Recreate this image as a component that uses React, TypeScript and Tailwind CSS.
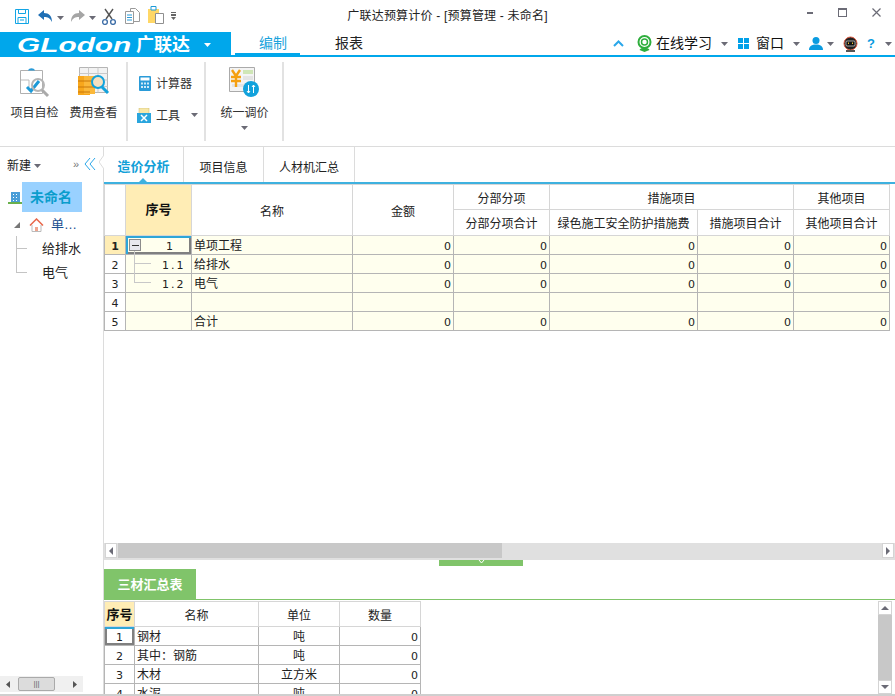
import type { ReactNode } from 'react'

const cjk = "font-['Liberation_Sans','Noto_Sans_CJK_SC',sans-serif]"

function Caret({ className = '' }: { className?: string }) {
  return (
    <svg width="7" height="4" viewBox="0 0 7 4" className={className}>
      <path d="M0 0h7L3.5 4z" fill="#6b6b76" />
    </svg>
  )
}

function QuickBar() {
  return (
    <div className="flex items-center h-8 pl-[15px]">
      <svg width="14" height="15" viewBox="0 0 14 15" fill="none" stroke="#12a5e5" strokeWidth="1">
        <path d="M.5.5h13v14H.5z" />
        <path d="M3.5.5v4h7v-4M3 14.5v-6h8v6M5 11h4" />
      </svg>
      <svg width="15" height="13" viewBox="0 0 15 13" className="ml-[9px]">
        <path d="M0 5 6 0v3c5 0 8 3 8 9-2-4-4-5-8-5v3z" fill="#1f6fb5" />
      </svg>
      <Caret className="ml-[4px] mt-1" />
      <svg width="15" height="13" viewBox="0 0 15 13" className="ml-[6px]">
        <path d="M15 5 9 0v3c-5 0-8 3-8 9 2-4 4-5 8-5v3z" fill="#a5a5a5" />
      </svg>
      <Caret className="ml-[4px] mt-1" />
      <svg width="14" height="17" viewBox="0 0 14 17" fill="none" className="ml-[6px]">
        <path d="M3 1l7 10M11 1 4 11" stroke="#555" strokeWidth="1.4" />
        <circle cx="3" cy="14" r="2.4" stroke="#3f6fa8" strokeWidth="1.4" />
        <circle cx="11" cy="14" r="2.4" stroke="#3f6fa8" strokeWidth="1.4" />
      </svg>
      <svg width="15" height="16" viewBox="0 0 15 16" fill="none" className="ml-[9px]">
        <path d="M5.5.5h5l4 4v9h-9z" fill="#fff" stroke="#9a9a9a" />
        <path d="M.5 3.5h8v12h-8z" fill="#fff" stroke="#9a9a9a" />
        <path d="M2 7h5M2 9.5h5M2 12h5" stroke="#2a9bd8" />
      </svg>
      <svg width="16" height="19" viewBox="0 0 16 19" fill="none" className="ml-[8px] -mt-1">
        <path d="M0 4h11v14H0z" fill="#ffd766" />
        <path d="M3 1.5h5V5H3z" fill="#fff" stroke="#1c9ad8" />
        <path d="M7.5 8.5h8v10h-8z" fill="#fff" stroke="#8f8f8f" />
      </svg>
      <svg width="5" height="8" viewBox="0 0 5 8" className="ml-[7px]">
        <path d="M0 0h5v1H0zM0 2h5v2H0zM0 5h5L2.5 8z" fill="#666" />
      </svg>
    </div>
  )
}

function WindowButtons() {
  return (
    <div className="flex justify-end items-start h-8 pt-[8px] pr-[14px] gap-[25px]">
      <div className="w-[6px] h-[2px] bg-[#6b6b76] mt-[4px]" />
      <div className="w-[9px] h-[9px] border border-[#6b6b76] border-t-2" />
      <svg width="9" height="9" viewBox="0 0 9 9" stroke="#6b6b76" strokeWidth="1.2">
        <path d="M.5.5l8 8M8.5.5l-8 8" />
      </svg>
    </div>
  )
}

function MenuBar() {
  return (
    <div className="flex h-[25px] border-b-2 border-[#00a7eb]">
      <div className="w-[231px] h-[25px] bg-[#00a7eb] flex items-center pl-[17px] text-white shrink-0">
        <span className="font-['Liberation_Sans'] italic font-bold text-[21px] leading-none w-[119px] scale-x-[1.42] origin-left">GLodon</span>
        <span className="font-bold text-[18px] leading-none">广联达</span>
        <svg width="7" height="4" viewBox="0 0 7 4" className="ml-[14px]"><path d="M0 0h7L3.5 4z" fill="#fff" /></svg>
      </div>
      <div className="ml-[4px] w-[65px] h-[25px] border-b-4 border-[#00a7eb] text-[14px] text-[#1aa3dc] leading-[23px] pl-[24px] whitespace-nowrap">编制</div>
      <div className="ml-[35px] text-[14px] text-[#222] leading-[23px]">报表</div>
      <div className="ml-auto flex items-center text-[14px] text-[#111] pr-[3px] h-[23px]">
        <svg width="11" height="7" viewBox="0 0 11 7" fill="none" stroke="#2aa7ea" strokeWidth="2"><path d="M1 6l4.5-4.5L10 6" /></svg>
        <svg width="17" height="17" viewBox="0 0 17 17" fill="none" className="ml-[12px]">
          <circle cx="8.5" cy="7" r="6" stroke="#2fae3d" strokeWidth="2" />
          <circle cx="8.5" cy="7" r="3" stroke="#2fae3d" strokeWidth="1.5" />
          <path d="M3.5 15c1-3 9-3 10 0l-5 2z" fill="#2fae3d" />
        </svg>
        <span className="ml-[3px]">在线学习</span>
        <Caret className="ml-[9px]" />
        <div className="ml-[10px] grid grid-cols-2 gap-[1px] w-[11px] h-[11px]">
          <i className="bg-[#00a0e9]" /><i className="bg-[#00a0e9]" /><i className="bg-[#00a0e9]" /><i className="bg-[#00a0e9]" />
        </div>
        <span className="ml-[7px]">窗口</span>
        <Caret className="ml-[9px]" />
        <svg width="14" height="13" viewBox="0 0 14 13" className="ml-[9px]">
          <circle cx="7" cy="3.5" r="3.5" fill="#0a9be0" />
          <path d="M0 13c0-4 3-5.5 7-5.5s7 1.5 7 5.5z" fill="#0a9be0" />
        </svg>
        <Caret className="ml-[4px]" />
        <svg width="15" height="16" viewBox="0 0 15 16" className="ml-[9px]">
          <circle cx="7.5" cy="7.5" r="6.5" fill="#222" stroke="#d9593f" strokeWidth="1" />
          <rect x="3" y="5" width="9" height="5" rx="1" fill="#111" stroke="#fff" strokeWidth=".6" />
          <path d="M5 6.5h1V8H5zM9 6.5h1V8H9z" fill="#f2c230" />
          <path d="M3 14h9v2H3z" fill="#555" />
        </svg>
        <span className="ml-[9px] text-[#0a9be0] font-bold text-[13px] w-[9px]">?</span>
        <Caret className="ml-[9px]" />
      </div>
    </div>
  )
}

function RibbonLarge({ label, icon, caret }: { label: string; icon: ReactNode; caret?: boolean }) {
  return (
    <div className="flex flex-col items-center w-[59px]">
      <div className="h-[33px] flex items-center justify-center">{icon}</div>
      <div className="mt-[6px] text-[12px] leading-[16px] whitespace-nowrap text-[#333]">{label}</div>
      {caret && <Caret className="mt-[5px]" />}
    </div>
  )
}

function Ribbon() {
  return (
    <div className="flex h-[90px] border-b border-[#dcdcdc] py-[5px]">
      <div className="w-[128px] border-r-2 border-[#e2e2e2] pl-[5px] pt-[4px] flex">
        <RibbonLarge
          label="项目自检"
          icon={
            <svg width="32" height="30" viewBox="0 0 32 30" fill="none">
              <path d="M1.5 2.5h22v23h-22z" stroke="#b0b0b0" />
              <path d="M9 2.5c1-3 6-3 7 0z" fill="#2a9bd8" />
              <path d="M2 12h8v7" stroke="#bbb" />
              <path d="M8 19l4 4 8-10" stroke="#1c9ad8" strokeWidth="3" />
              <circle cx="19" cy="17" r="6" stroke="#b5b5b5" strokeWidth="2" />
              <path d="M23 22l6 6" stroke="#aaa" strokeWidth="3" />
            </svg>
          }
        />
        <RibbonLarge
          label="费用查看"
          icon={
            <svg width="32" height="31" viewBox="0 0 32 31" fill="none">
              <path d="M1.5.5h28v25h-28z" fill="#f2f2f2" stroke="#b5b5b5" />
              <path d="M1.5 6.5h28M1.5 13h28M1.5 19.5h28M10.5.5v25M20 .5v25" stroke="#c9c9c9" />
              <path d="M0 9h12v19H0z" fill="#f8a71c" />
              <path d="M6 9h11v18H6z" fill="#fbb83a" />
              <path d="M0 14h17M0 20h17M0 25h12" stroke="#c9780a" />
              <circle cx="20" cy="15" r="6" fill="#f5e0c0" stroke="#12a2dc" strokeWidth="2" />
              <path d="M24 20l6 6" stroke="#12a2dc" strokeWidth="3" />
            </svg>
          }
        />
      </div>
      <div className="w-[78px] border-r-2 border-[#e2e2e2] pl-[10px] text-[12px] text-[#333]">
        <div className="flex items-center h-[16px] mt-[13px] ml-[1px]">
          <svg width="12" height="15" viewBox="0 0 12 15">
            <rect width="12" height="15" rx="1" fill="#2a9bd8" />
            <rect x="1.5" y="1.5" width="9" height="3" fill="#fff" />
            <path d="M2 6.5h2v2H2zM5 6.5h2v2H5zM8 6.5h2v2H8zM2 10h2v2H2zM5 10h2v2H5zM8 10h2v2H8z" fill="#cfeaf8" />
          </svg>
          <span className="ml-[5px] pt-[1px] whitespace-nowrap">计算器</span>
        </div>
        <div className="flex items-center h-[18px] mt-[15px] -ml-[1px]">
          <svg width="14" height="15" viewBox="0 0 14 15">
            <path d="M2 0h10v8H2z" fill="#f6e7a8" stroke="#c8b66a" strokeWidth=".5" />
            <path d="M0 5h14v10H0z" fill="#2aa5dd" />
            <path d="M4 7l6 6M10 7l-6 6" stroke="#fff" strokeWidth="1.5" />
          </svg>
          <span className="ml-[5px] pt-[1px] whitespace-nowrap">工具</span>
          <Caret className="ml-[11px]" />
        </div>
      </div>
      <div className="w-[78px] border-r-2 border-[#e2e2e2] pl-[9px] pt-[4px]">
        <RibbonLarge
          caret
          label="统一调价"
          icon={
            <svg width="31" height="31" viewBox="0 0 31 31">
              <path d="M.5.5h25v24H.5z" fill="#f4f4f4" stroke="#aaa" />
              <path d="M14 3h10v4H14z" fill="#cfe6b6" />
              <path d="M14 9h10v4H14zM3 17h14v3H3z" fill="#e4e4e4" />
              <path d="M3 3l4 6 4-6M2 10h10M2 14h10M7 9v11" stroke="#f5a011" strokeWidth="2.4" fill="none" />
              <circle cx="22" cy="22" r="8" fill="#12a2dc" />
              <path d="M19.5 18v8M24.5 18v8M18 24l1.5 2 1.5-2M23 20l1.5-2 1.5 2" stroke="#fff" fill="none" />
            </svg>
          }
        />
      </div>
    </div>
  )
}

function Sidebar() {
  return (
    <div className="w-[104px] shrink-0 border-r border-[#dcdcdc] flex flex-col relative">
      <svg width="5" height="14" viewBox="0 0 5 14" fill="#fff" stroke="#dcdcdc" className="absolute -right-[1px] top-[8px]">
        <path d="M5 0 0 7l5 7" />
      </svg>
      <div className="flex items-center h-[35px] pl-[7px] pt-[2px] text-[12px] text-[#222]">
        新建
        <Caret className="ml-[3px]" />
        <span className="ml-auto mr-[5px] text-[#777] text-[11px] -mt-[2px]">»</span>
        <svg width="12" height="14" viewBox="0 0 12 14" fill="none" stroke="#2aa7ea" className="mr-[7px] -mt-[4px]">
          <path d="M6 1 1 7l5 6M11 1 6 7l5 6" />
        </svg>
      </div>
      <div className="flex items-center h-[30px]">
        <svg width="14" height="14" viewBox="0 0 14 14" className="ml-[8px]">
          <path d="M3 2h9v11H3z" fill="#4a9ed8" />
          <path d="M5 4h1v1H5zM8 4h1v1H8zM5 7h1v1H5zM8 7h1v1H8zM5 10h1v1H5zM8 10h1v1H8z" fill="#fff" />
          <path d="M0 12h14v2H0z" fill="#6ab04c" />
        </svg>
        <div className="w-[60px] h-[30px] bg-[#99d1ff] text-[14px] font-bold text-[#0a9dcc] pl-[8px] leading-[30px]">未命名</div>
      </div>
      <div className="flex items-center h-[23px] mt-[1px] pl-[14px] text-[13px] text-[#1b4f8f]">
        <svg width="6" height="6" viewBox="0 0 6 6"><path d="M6 0v6H0z" fill="#777" /></svg>
        <svg width="15" height="14" viewBox="0 0 15 14" fill="none" className="ml-[9px]">
          <path d="M3 7v6.5h9V7" stroke="#bbb" fill="#fff" />
          <path d="M1 7.5 7.5 1 14 7.5" stroke="#e8674a" strokeWidth="1.5" />
          <path d="M6 9h3v4H6z" fill="#f0a58e" />
        </svg>
        <span className="ml-[7px] whitespace-nowrap">单…</span>
      </div>
      <div className="relative pl-[42px] text-[13px] text-[#222] leading-[23px] mt-[1px]">
        <div className="h-[24px]">给排水</div>
        <div className="h-[23px]">电气</div>
        <div className="absolute left-[16px] top-[-1px] w-[11px] h-[13px] border-l border-b border-[#c4c4c4]" />
        <div className="absolute left-[16px] top-[12px] w-[11px] h-[24px] border-l border-b border-[#c4c4c4]" />
      </div>
      <div className="mt-auto mb-[2px] w-[83px] h-[16px] bg-[#f0f0f0] flex items-center px-[6px]">
        <svg width="4" height="7" viewBox="0 0 4 7"><path d="M4 0v7L0 3.5z" fill="#555" /></svg>
        <div className="ml-[8px] w-[37px] h-[14px] rounded-[2px] border border-[#aaa] bg-[#dcdcdc] flex items-center justify-center text-[8px] text-[#666] leading-none">|||</div>
        <svg width="4" height="7" viewBox="0 0 4 7" className="ml-auto"><path d="M0 0v7l4-3.5z" fill="#555" /></svg>
      </div>
    </div>
  )
}

const num = "font-['DejaVu_Sans',sans-serif] text-[11px] leading-[15px] pt-[3px]"
const head = 'border border-[#d6d6d6] font-normal text-center p-0 pt-[3px] leading-[16px]'
const body = 'border border-[#b5b5b5] bg-[#ffffee] p-0 px-[2px]'
const cellText = 'pt-[3px] leading-[15px]'
const selected = 'shadow-[inset_2px_2px_0_#2ea6d8,inset_-2px_-2px_0_#808080]'

const rows = [
  { no: '1', seq: '1', name: '单项工程', zero: true },
  { no: '2', seq: '1.1', name: '给排水', zero: true },
  { no: '3', seq: '1.2', name: '电气', zero: true },
  { no: '4', seq: '', name: '', zero: false },
  { no: '5', seq: '', name: '合计', zero: true },
]

function CostGrid() {
  return (
    <table className="table-fixed w-[785px] text-[12px] text-[#222] border-collapse">
      <colgroup>
        <col className="w-[21px]" />
        <col className="w-[66px]" />
        <col className="w-[161px]" />
        <col className="w-[101px]" />
        <col className="w-[96px]" />
        <col className="w-[148px]" />
        <col className="w-[96px]" />
        <col className="w-[96px]" />
      </colgroup>
      <thead>
        <tr className="h-[25px]">
          <th rowSpan={2} className={head} />
          <th rowSpan={2} className="border border-[#d6d6d6] p-0 bg-[#ffedb5] font-bold text-[13px] text-[#111]">序号</th>
          <th rowSpan={2} className={head}>名称</th>
          <th rowSpan={2} className={head}>金额</th>
          <th className={head}>分部分项</th>
          <th colSpan={2} className={head}>措施项目</th>
          <th className={head}>其他项目</th>
        </tr>
        <tr className="h-[26px]">
          <th className={head}>分部分项合计</th>
          <th className={head}>绿色施工安全防护措施费</th>
          <th className={head}>措施项目合计</th>
          <th className={head}>其他项目合计</th>
        </tr>
      </thead>
      <tbody>
        {rows.map((r, i) => (
          <tr key={r.no} className="h-[19px]">
            <td className={'border border-[#b5b5b5] text-center p-0 ' + num + (i === 0 ? ' bg-[#ffedb5] font-bold' : ' bg-white')}>{r.no}</td>
            <td className={body + ' relative tracking-[2px] whitespace-nowrap ' + num + (i === 0 ? ' ' + selected : '')}>
              {i === 0 && (
                <div className="absolute left-[3px] top-[3px] w-[12px] h-[12px] border border-[#8c8c8c] bg-[#e8e8ee] flex items-center justify-center">
                  <div className="w-[7px] h-[1px] bg-[#333]" />
                </div>
              )}
              {(i === 1 || i === 2) && (
                <div className={'absolute left-[8px] w-[17px] border-l border-b border-[#c8c8c8] ' + (i === 1 ? '-top-[4px] h-[13px]' : '-top-[10px] h-[19px]')} />
              )}
              <span className={i === 0 ? 'pl-[38px]' : 'pl-[34px]'}>{r.seq}</span>
            </td>
            <td className={body + ' whitespace-nowrap ' + cellText}>{r.name}</td>
            {[0, 1, 2, 3, 4].map((c) => (
              <td key={c} className={body + ' text-right ' + num}>{r.zero ? '0' : ''}</td>
            ))}
          </tr>
        ))}
      </tbody>
    </table>
  )
}

function HScroll() {
  return (
    <div className="h-[15px] bg-[#e0e0e0] flex items-stretch shrink-0">
      <div className="ml-[1px] w-[12px] bg-white border border-[#d4d4d4] flex items-center justify-center">
        <svg width="4" height="8" viewBox="0 0 4 8"><path d="M4 0v8L0 4z" fill="#6b6b76" /></svg>
      </div>
      <div className="ml-[1px] w-[384px] bg-[#c8c8c8]" />
      <div className="ml-auto mr-[1px] w-[12px] bg-white border border-[#d4d4d4] flex items-center justify-center">
        <svg width="4" height="8" viewBox="0 0 4 8"><path d="M0 0v8l4-4z" fill="#6b6b76" /></svg>
      </div>
    </div>
  )
}

const materials = [
  { no: '1', name: '钢材', unit: '吨' },
  { no: '2', name: '其中：钢筋', unit: '吨' },
  { no: '3', name: '木材', unit: '立方米' },
  { no: '4', name: '水泥', unit: '吨' },
]

function MaterialGrid() {
  return (
    <table className="table-fixed w-[316px] text-[12px] text-[#222] border-collapse">
      <colgroup>
        <col className="w-[30px]" />
        <col className="w-[124px]" />
        <col className="w-[81px]" />
        <col className="w-[81px]" />
      </colgroup>
      <thead>
        <tr className="h-[25px]">
          <th className="border border-[#d6d6d6] bg-[#ffedb5] font-bold text-[13px] text-[#111] p-0 pt-[2px] leading-[16px]">序号</th>
          <th className={head}>名称</th>
          <th className={head}>单位</th>
          <th className={head}>数量</th>
        </tr>
      </thead>
      <tbody>
        {materials.map((m, i) => (
          <tr key={m.no} className="h-[19px]">
            <td className={'border border-[#b5b5b5] text-center p-0 ' + num + (i === 0 ? ' shadow-[inset_0_2px_0_#2ea6d8,inset_2px_0_0_#808080,inset_-2px_-2px_0_#808080]' : '')}>{m.no}</td>
            <td className={'border border-[#b5b5b5] p-0 px-[2px] whitespace-nowrap ' + cellText}>{m.name}</td>
            <td className={'border border-[#b5b5b5] text-center p-0 ' + cellText}>{m.unit}</td>
            <td className={'border border-[#b5b5b5] text-right p-0 px-[2px] ' + num}>0</td>
          </tr>
        ))}
      </tbody>
    </table>
  )
}

function VScroll() {
  return (
    <div className="w-[14px] h-full bg-[#e0e0e0] flex flex-col">
      <div className="h-[14px] bg-white border border-[#d4d4d4] flex items-center justify-center">
        <svg width="8" height="4" viewBox="0 0 8 4"><path d="M0 4h8L4 0z" fill="#6b6b76" /></svg>
      </div>
      <div className="flex-1 bg-[#c8c8c8]" />
      <div className="h-[14px] bg-white border border-[#d4d4d4] flex items-center justify-center">
        <svg width="8" height="4" viewBox="0 0 8 4"><path d="M0 0h8L4 4z" fill="#6b6b76" /></svg>
      </div>
    </div>
  )
}

function Content() {
  return (
    <div className="flex-1 min-w-0 flex flex-col">
      <div className="flex h-[37px] border-b-2 border-[#3eb1df] text-[12px] text-[#222] shrink-0">
        <div className="relative w-[80px] border-r border-[#dcdcdc] text-center text-[13px] leading-[40px] font-bold text-[#12a0d8]">
          造价分析
          <div className="absolute left-[35px] bottom-0 w-0 h-0 border-x-[4px] border-x-transparent border-b-[4px] border-b-[#3eb1df]" />
        </div>
        <div className="w-[80px] border-r border-[#dcdcdc] text-center leading-[42px]">项目信息</div>
        <div className="w-[91px] border-r border-[#dcdcdc] text-center leading-[42px]">人材机汇总</div>
      </div>
      <div className="h-[359px] overflow-hidden shrink-0">
        <CostGrid />
      </div>
      <HScroll />
      <div className="h-[2px] bg-[#e0e0e0] shrink-0" />
      <div className="h-[6px] flex justify-center shrink-0 pr-[37px]">
        <div className="w-[84px] h-[6px] bg-[#80c46a] flex justify-center">
          <svg width="7" height="4" viewBox="0 0 7 4" fill="none" stroke="#fff"><path d="M1 0l2.5 3L6 0" /></svg>
        </div>
      </div>
      <div className="mt-[3px] h-[31px] border-b border-[#80c46a] shrink-0">
        <div className="w-[92px] h-[30px] bg-[#80c46a] text-white text-[13px] font-bold text-center leading-[32px]">三材汇总表</div>
      </div>
      <div className="flex flex-1 min-h-0 pt-[1px] overflow-hidden">
        <div className="flex-1 overflow-hidden">
          <MaterialGrid />
        </div>
        <div className="mr-[3px] h-full">
          <VScroll />
        </div>
      </div>
    </div>
  )
}

export default function App() {
  return (
    <div className={'w-[895px] h-[696px] bg-white overflow-hidden flex flex-col ' + cjk}>
      <div className="grid grid-cols-[1fr_auto_1fr] h-8 shrink-0">
        <QuickBar />
        <div className="text-[12px] tracking-[0.2px] leading-[32px] text-[#222] whitespace-nowrap">广联达预算计价 - [预算管理 - 未命名]</div>
        <WindowButtons />
      </div>
      <MenuBar />
      <Ribbon />
      <div className="flex flex-1 min-h-0">
        <Sidebar />
        <Content />
      </div>
      <div className="h-[2px] bg-[#cfcfcf] shrink-0" />
    </div>
  )
}
